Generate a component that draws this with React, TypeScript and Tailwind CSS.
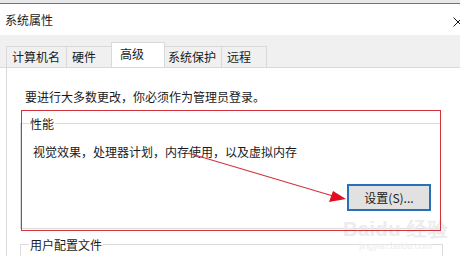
import React from "react";

const font = { fontFamily: '"Noto Sans CJK SC", "Microsoft YaHei", sans-serif' };

function Tab({ label, selected, w }: { label: string; selected?: boolean; w: string }) {
  if (selected) {
    return (
      <div className={`${w} h-[25px] -mx-[2px] bg-white border border-[#d9d9d9] border-b-0 flex items-start pt-[2px] pl-[8px] text-[12px] text-[#1a1a1a] relative z-10`}>
        {label}
      </div>
    );
  }
  return (
    <div className={`${w} h-[21px] bg-[#f0f0f0] border border-[#d9d9d9] border-b-0 -ml-px first:ml-0 flex items-center pl-[5px] text-[12px] text-[#1a1a1a]`}>
      {label}
    </div>
  );
}

function GroupLabel({ label }: { label: string }) {
  return (
    <div className="absolute -top-[10px] -left-px -right-px h-[18px] flex items-center">
      <div className="w-[9px] h-px bg-[#dcdcdc]" />
      <span className="px-[1px] text-[12px] leading-[18px] text-[#1a1a1a] translate-y-[1px]">{label}</span>
      <div className="flex-1 h-px bg-[#dcdcdc]" />
    </div>
  );
}

export default function App() {
  return (
    <div className="w-[460px] h-[256px] overflow-hidden bg-white relative" style={font}>
      <div className="h-[3px] bg-[#e8e8e8]" />
      <div className="h-[1px] bg-[#747474]" />
      <div className="h-[31px] bg-white flex items-center pl-[5px] text-[12px] text-[#1a1a1a] relative">
        系统属性
        <svg className="absolute left-[453px] top-[13px]" width="10" height="10" viewBox="0 0 10 10">
          <path d="M0.5 0.5 L9.5 9.5 M9.5 0.5 L0.5 9.5" stroke="#1a1a1a" strokeWidth="1" />
        </svg>
      </div>
      <div className="bg-[#f0f0f0] pt-[12px] pl-[6px] h-[33px] flex items-end border-b border-[#d9d9d9]">
        <Tab label="计算机名" w="w-[61px]" />
        <Tab label="硬件" w="w-[47px]" />
        <Tab label="高级" selected w="w-[54px]" />
        <Tab label="系统保护" w="w-[60px]" />
        <Tab label="远程" w="w-[46px]" />
      </div>
      <div className="ml-[6px] border-l border-[#d9d9d9] bg-white h-[200px] relative">
        <div className="pt-[21px] pl-[18px] text-[12px] text-[#1a1a1a] leading-[16px]">
          要进行大多数更改，你必须作为管理员登录。
        </div>
        <div className="mt-[19px] ml-[13px] w-[421px] h-[105px] border border-[#dcdcdc] border-t-0 relative">
          <GroupLabel label="性能" />
          <div className="pt-[20px] pl-[12px] text-[12px] text-[#1a1a1a] leading-[16px]">
            视觉效果，处理器计划，内存使用，以及虚拟内存
          </div>
          <div className="flex justify-end pr-[9px] pt-[24px]">
            <button className="w-[84px] h-[27px] bg-[#e1e1e1] border-2 border-[#2a70b8] text-[12px] text-[#1a1a1a] flex items-center justify-center">
              设置(S)...
            </button>
          </div>
        </div>
        <div className="mt-[16px] ml-[13px] w-[423px] h-[30px] border border-[#dcdcdc] border-t-0 relative">
          <GroupLabel label="用户配置文件" />
        </div>
      </div>
      {/* watermark */}
      <div className="absolute left-[343px] top-[218px] flex flex-col items-center pointer-events-none text-[#ececec]">
        <span className="text-[20px] leading-[22px] font-bold tracking-wide" style={{ fontFamily: '"Liberation Sans", sans-serif' }}>Baidu 经验</span>
        <span className="text-[9px] leading-[12px]" style={{ fontFamily: '"Liberation Sans", sans-serif' }}>jingyan.baidu.com</span>
      </div>
      {/* red annotation box */}
      <div className="absolute left-[21px] top-[110px] w-[420px] h-[121px] border border-[#d2323c] pointer-events-none" />
      {/* arrow */}
      <svg className="absolute left-0 top-0 pointer-events-none" width="460" height="256">
        <line x1="188" y1="153" x2="333" y2="196" stroke="#d2323c" strokeWidth="1.2" />
        <polygon points="346,199 329,202 333,191" fill="#e01020" />
      </svg>
    </div>
  );
}
